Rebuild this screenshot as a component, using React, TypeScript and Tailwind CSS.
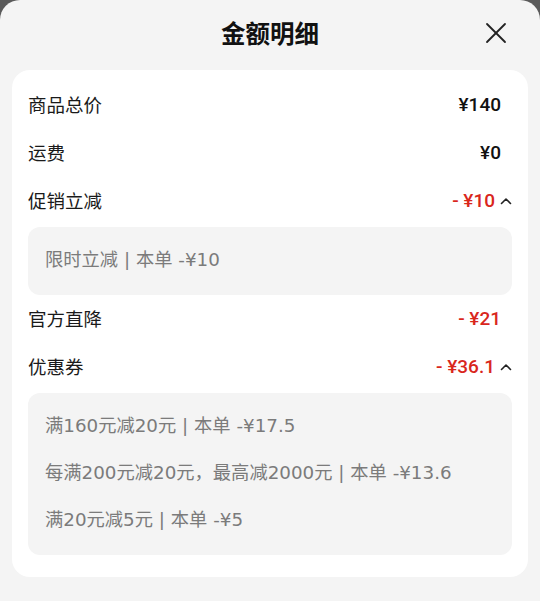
import { X } from "lucide-react";

type Row = {
  label: string;
  value: string;
  red?: boolean;
  open?: boolean;
  details?: string[];
};

const rows: Row[] = [
  { label: "商品总价", value: "¥140" },
  { label: "运费", value: "¥0" },
  { label: "促销立减", value: "- ¥10", red: true, open: true, details: ["限时立减 | 本单 -¥10"] },
  { label: "官方直降", value: "- ¥21", red: true },
  {
    label: "优惠券",
    value: "- ¥36.1",
    red: true,
    open: true,
    details: [
      "满160元减20元 | 本单 -¥17.5",
      "每满200元减20元，最高减2000元 | 本单 -¥13.6",
      "满20元减5元 | 本单 -¥5",
    ],
  },
];

const Chevron = () => (
  <svg width="12" height="8" viewBox="0 0 12 8" fill="none" className="ml-[5px]">
    <path d="M1.5 6.5 6 2l4.5 4.5" stroke="#222" strokeWidth="1.6" strokeLinecap="round" strokeLinejoin="round" />
  </svg>
);

const App = () => {
  return (
    <div className="h-[601px] w-[540px] bg-[#5a5a5a] font-['Noto_Sans_CJK_SC',sans-serif]">
      <div className="flex h-full flex-col rounded-t-[20px] bg-[#f4f4f4] px-3">
        <div className="relative mb-[4px] flex h-[66px] shrink-0 items-center justify-center">
          <h1 className="text-[24.5px] font-bold text-[#111]">金额明细</h1>
          <button className="absolute right-[14px] top-[15px] text-[#222]">
            <X size={36} strokeWidth={1.2} />
          </button>
        </div>

        <div className="rounded-[18px] bg-white px-4 pb-[22px] pt-[11px]">
          {rows.map((row) => (
            <div key={row.label}>
              <div className="flex h-12 items-center justify-between">
                <span className="text-[18.5px] text-[#1a1a1a]">{row.label}</span>
                <div className="flex items-center">
                  <span
                    className={
                      row.red
                        ? "font-['Roboto',sans-serif] text-[19px] font-medium text-[#d9261c]"
                        : "font-['Roboto',sans-serif] text-[19px] font-medium text-[#111]"
                    }
                  >
                    {row.value}
                  </span>
                  {row.open ? <Chevron /> : <span className="w-[11px]" />}
                </div>
              </div>
              {row.details && (
                <div className="mt-0.5 rounded-[12px] bg-[#f4f4f4] px-[17px] pb-[12px] pt-[9px]">
                  {row.details.map((d) => (
                    <div
                      key={d}
                      className="flex h-[47px] items-center font-['DejaVu_Sans','Noto_Sans_CJK_SC',sans-serif] text-[18.3px] text-[#7b7b7b]"
                    >
                      {d}
                    </div>
                  ))}
                </div>
              )}
            </div>
          ))}
        </div>
      </div>
    </div>
  );
};

export default App;
